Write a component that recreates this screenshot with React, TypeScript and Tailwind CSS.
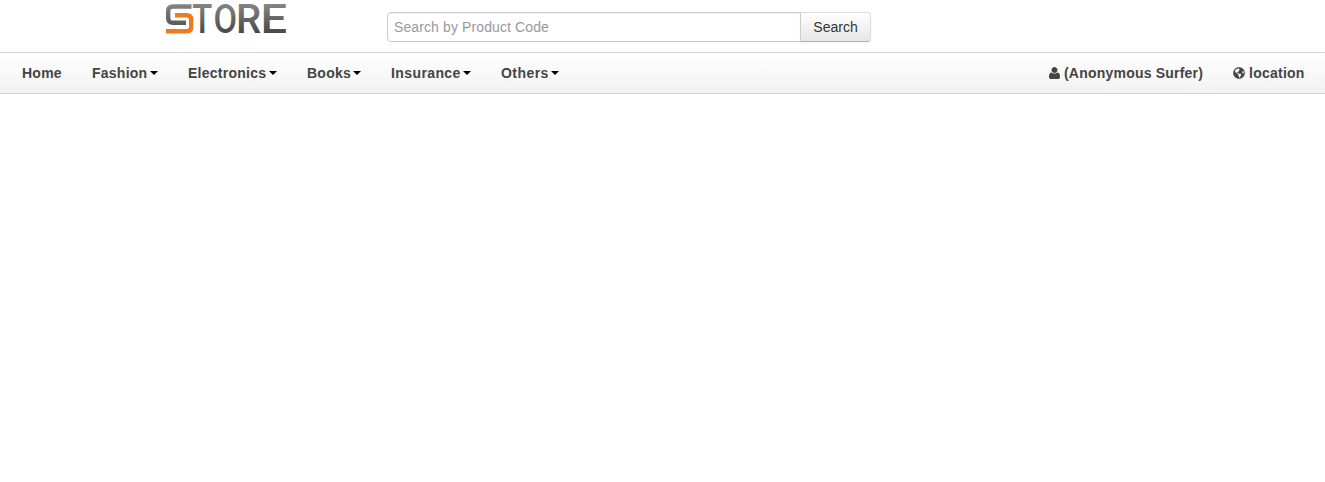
import { FaGlobeAmericas } from "react-icons/fa";

const menus = [
  { name: "Fashion", style: "w-[66px] tracking-[0.25px]" },
  { name: "Electronics", style: "w-[89px] tracking-[0.25px]" },
  { name: "Books", style: "w-[54px] tracking-[0.25px]" },
  { name: "Insurance", style: "w-[80px] tracking-[0.4px]" },
  { name: "Others", style: "w-[58px] tracking-[0.45px]" },
];

const letters = [
  { char: "T", x: 192.3, width: 20 },
  { char: "O", x: 213.5, width: 23.6 },
  { char: "R", x: 236, width: 25.2 },
  { char: "E", x: 260.6, width: 26.6 },
];

function Logo() {
  return (
    <svg className="block overflow-visible" width="124" height="36" viewBox="165 0 124 36" role="img" aria-label="Store">
      <defs>
        <linearGradient id="steel" gradientUnits="userSpaceOnUse" x1="0" y1="4" x2="0" y2="34">
          <stop offset="0" stopColor="#858585" />
          <stop offset="1" stopColor="#464646" />
        </linearGradient>
      </defs>
      <g fill="none" strokeWidth="4.4">
        <path stroke="url(#steel)" d="M191.5 6.5H173Q168.2 6.5 168.2 11V18Q168.2 22.8 173 22.8H186" />
        <path stroke="#f07a1c" d="M175 15.2H186.5Q191.2 15.2 191.2 19.5V27Q191.2 31.3 186.5 31.3H166" />
      </g>
      {letters.map(({ char, x, width }) => (
        <text
          key={char}
          x={x}
          y="33"
          fontFamily="Roboto, sans-serif"
          fontWeight="500"
          fontSize="40"
          textLength={width}
          lengthAdjust="spacingAndGlyphs"
          fill="url(#steel)"
        >
          {char}
        </text>
      ))}
    </svg>
  );
}

function UserIcon() {
  return (
    <svg className="shrink-0" width="11" height="12" viewBox="0 0 1408 1536" fill="currentColor" aria-hidden="true">
      <path d="M1408 1277q0 120-73 189.5t-194 69.5h-874q-121 0-194-69.5t-73-189.5q0-53 3.5-103.5t14-109 26.5-108.5 43-97.5 62-81 85.5-53.5 111.5-20q9 0 42 21.5t74.5 48 108 48 133.5 21.5 133.5-21.5 108-48 74.5-48 42-21.5q61 0 111.5 20t85.5 53.5 62 81 43 97.5 26.5 108.5 14 109 3.5 103.5zm-320-893q0 159-112.5 271.5t-271.5 112.5-271.5-112.5-112.5-271.5 112.5-271.5 271.5-112.5 271.5 112.5 112.5 271.5z" />
    </svg>
  );
}

export default function App() {
  return (
    <div className="h-[482px] overflow-hidden bg-white font-['Liberation_Sans',Arial,sans-serif] text-sm leading-5 text-[#333]">
      <header className="flex h-[52px] items-start pl-[165px]">
        <div className="w-[222px]"><Logo /></div>
        <form className="mt-3 flex" onSubmit={(e) => e.preventDefault()}>
          <input
            className="h-[30px] w-[414px] rounded-l-[4px] border border-[#ccc] bg-white px-1.5 py-1 shadow-[inset_0_1px_1px_rgba(0,0,0,0.075)] outline-none placeholder:tracking-[0.11px] placeholder:text-[#999]"
            placeholder="Search by Product Code"
          />
          <button className="-ml-px h-[30px] w-[71px] rounded-r-[4px] border border-[#ccc] border-t-[#ddd] border-r-[#ddd] border-b-[#b3b3b3] bg-linear-to-b from-white to-[#e6e6e6] text-center shadow-[inset_0_1px_0_rgba(255,255,255,0.2),0_1px_2px_rgba(0,0,0,0.05)]">
            Search
          </button>
        </form>
      </header>
      <nav className="flex h-[42px] items-center justify-between border-y border-[#d4d4d4] bg-linear-to-b from-white to-[#f2f2f2] pr-5 pl-[22px] font-bold text-[#444]">
        <div className="flex gap-[30px]">
          <a className="w-10 tracking-[0.25px]">Home</a>
          {menus.map(({ name, style }) => (
            <a key={name} className={`flex items-center justify-between ${style}`}>
              {name}
              <span className="h-0 w-0 border-x-4 border-t-4 border-x-transparent border-t-black" />
            </a>
          ))}
        </div>
        <div className="flex gap-[30px]">
          <a className="flex w-[154px] items-center gap-1 whitespace-nowrap tracking-[0.21px]"><UserIcon />(Anonymous Surfer)</a>
          <a className="flex w-[72px] items-center gap-1 whitespace-nowrap tracking-[0.25px]"><FaGlobeAmericas size={12} />location</a>
        </div>
      </nav>
    </div>
  );
}
